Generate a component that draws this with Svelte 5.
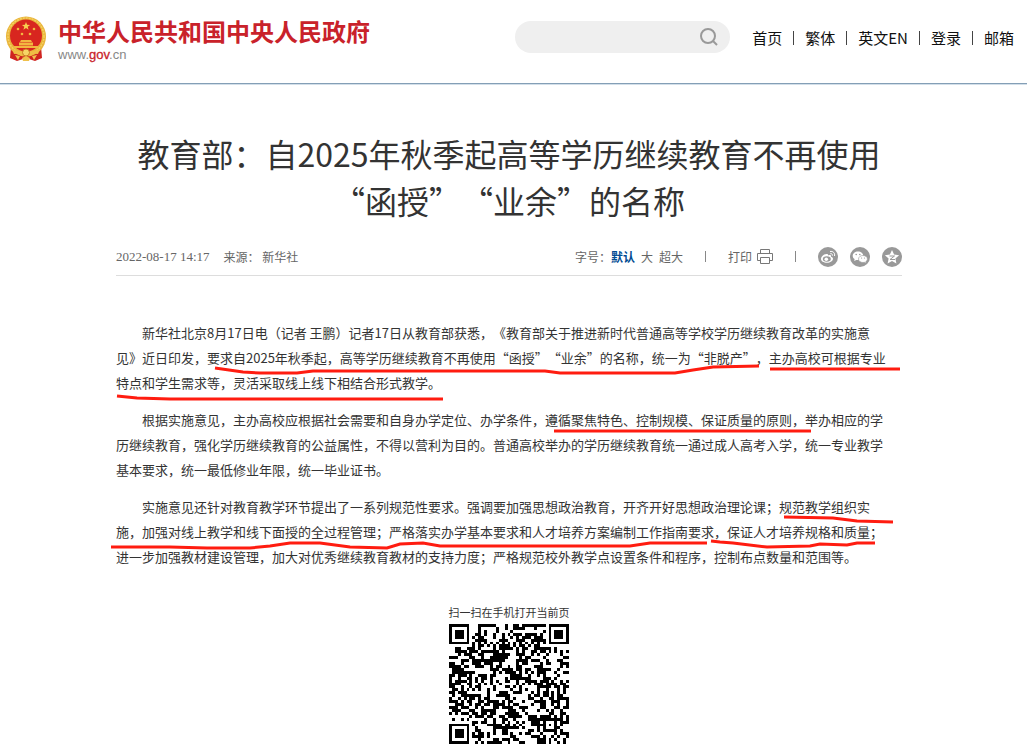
<script lang="ts">
  const nav = ['首页', '繁体', '英文EN', '登录', '邮箱'];

  const paragraphs = [
    [
      '新华社北京8月17日电（记者 王鹏）记者17日从教育部获悉，《教育部关于推进新时代普通高等学校学历继续教育改革的实施意',
      '见》近日印发，要求自2025年秋季起，高等学历继续教育不再使用“函授”“业余”的名称，统一为“非脱产”，主办高校可根据专业',
      '特点和学生需求等，灵活采取线上线下相结合形式教学。',
    ],
    [
      '根据实施意见，主办高校应根据社会需要和自身办学定位、办学条件，遵循聚焦特色、控制规模、保证质量的原则，举办相应的学',
      '历继续教育，强化学历继续教育的公益属性，不得以营利为目的。普通高校举办的学历继续教育统一通过成人高考入学，统一专业教学',
      '基本要求，统一最低修业年限，统一毕业证书。',
    ],
    [
      '实施意见还针对教育教学环节提出了一系列规范性要求。强调要加强思想政治教育，开齐开好思想政治理论课；规范教学组织实',
      '施，加强对线上教学和线下面授的全过程管理；严格落实办学基本要求和人才培养方案编制工作指南要求，保证人才培养规格和质量；',
      '进一步加强教材建设管理，加大对优秀继续教育教材的支持力度；严格规范校外教学点设置条件和程序，控制布点数量和范围等。',
    ],
  ];

  // hand-drawn red marker strokes
  const marks = [
    '215,368 229,370 243,372 260,373 297,373 313,371 470,371 545,371 560,373 675,373 693,370 713,367 759,366',
    '770,369 900,369',
    '117,396 137,398 170,399 443,399',
    '554,431 811,431',
    '784,517 833,518 857,521 893,522',
    '111,547 170,547 207,548 250,548 270,546 290,543 320,543 350,547 387,548 400,544 423,543 440,546 630,546 650,543 707,543',
    '711,541 720,542 733,543 767,547 810,546 820,544 847,545 857,543 875,543',
  ];

  // QR code, version 6, level H: 4 blocks of 15 data + 28 correction bytes
  const SIZE = 41;

  function mul(a: number, b: number) {
    let r = 0;
    for (let i = 7; i >= 0; i--) {
      r = (r << 1) ^ ((r >> 7) * 0x11d);
      if ((b >> i) & 1) r ^= a;
    }
    return r;
  }

  function correction(data: number[], degree: number) {
    const gen = Array(degree).fill(0);
    gen[degree - 1] = 1;
    let root = 1;
    for (let i = 0; i < degree; i++) {
      for (let j = 0; j < degree; j++) {
        gen[j] = mul(gen[j], root);
        if (j + 1 < degree) gen[j] ^= gen[j + 1];
      }
      root = mul(root, 2);
    }
    const rem = Array(degree).fill(0);
    for (const b of data) {
      const f = b ^ rem.shift();
      rem.push(0);
      gen.forEach((g, i) => (rem[i] ^= mul(g, f)));
    }
    return rem;
  }

  function codewords(text: string) {
    let bits = '0100' + text.length.toString(2).padStart(8, '0');
    for (const c of text) bits += c.charCodeAt(0).toString(2).padStart(8, '0');
    bits += '0000';
    const data = (bits.match(/.{8}/g) ?? []).map(b => parseInt(b, 2));
    for (let pad = 0xec; data.length < 60; pad ^= 0xfd) data.push(pad);

    const blocks = [0, 1, 2, 3].map(i => data.slice(i * 15, i * 15 + 15));
    const ecs = blocks.map(b => correction(b, 28));
    const out: number[] = [];
    for (let i = 0; i < 15; i++) for (const b of blocks) out.push(b[i]);
    for (let i = 0; i < 28; i++) for (const e of ecs) out.push(e[i]);
    return out;
  }

  function qrPath(text: string) {
    const grid: number[][] = Array.from({ length: SIZE }, () => Array(SIZE).fill(-1));
    const set = (x: number, y: number, v: boolean | number) => {
      if (x >= 0 && y >= 0 && x < SIZE && y < SIZE) grid[y][x] = v ? 1 : 0;
    };

    for (let i = 0; i < SIZE; i++) {
      set(6, i, i % 2 === 0);
      set(i, 6, i % 2 === 0);
    }
    for (const [cx, cy] of [[3, 3], [SIZE - 4, 3], [3, SIZE - 4]]) {
      for (let dy = -4; dy <= 4; dy++) {
        for (let dx = -4; dx <= 4; dx++) {
          const d = Math.max(Math.abs(dx), Math.abs(dy));
          set(cx + dx, cy + dy, d !== 2 && d !== 4);
        }
      }
    }
    for (let dy = -2; dy <= 2; dy++) {
      for (let dx = -2; dx <= 2; dx++) {
        set(34 + dx, 34 + dy, Math.max(Math.abs(dx), Math.abs(dy)) !== 1);
      }
    }

    // format bits: level H, mask 3
    const fmt = (2 << 3) | 3;
    let rem = fmt;
    for (let i = 0; i < 10; i++) rem = (rem << 1) ^ ((rem >> 9) * 0x537);
    const bits = ((fmt << 10) | rem) ^ 0x5412;
    const bit = (i: number) => (bits >> i) & 1;
    for (let i = 0; i <= 5; i++) set(8, i, bit(i));
    set(8, 7, bit(6));
    set(8, 8, bit(7));
    set(7, 8, bit(8));
    for (let i = 9; i < 15; i++) set(14 - i, 8, bit(i));
    for (let i = 0; i < 8; i++) set(SIZE - 1 - i, 8, bit(i));
    for (let i = 8; i < 15; i++) set(8, SIZE - 15 + i, bit(i));
    set(8, SIZE - 8, 1);

    const data = codewords(text);
    let n = 0;
    for (let right = SIZE - 1; right >= 1; right -= 2) {
      if (right === 6) right = 5;
      const up = ((right + 1) & 2) === 0;
      for (let v = 0; v < SIZE; v++) {
        for (let j = 0; j < 2; j++) {
          const x = right - j;
          const y = up ? SIZE - 1 - v : v;
          if (grid[y][x] !== -1) continue;
          const b = n < data.length * 8 ? (data[n >> 3] >> (7 - (n & 7))) & 1 : 0;
          grid[y][x] = (x + y) % 3 === 0 ? b ^ 1 : b;
          n++;
        }
      }
    }

    return grid.flatMap((row, y) => row.map((v, x) => (v === 1 ? `M${x} ${y}h1v1h-1z` : ''))).join('');
  }

  const qr = qrPath('http://www.gov.cn/xinwen/2022-08/17/content_5705692.htm');
</script>

<header class="site-header">
  <a class="brand" href="#home">
    <svg class="emblem" viewBox="0 0 42 46" aria-hidden="true">
      <path d="M6 30 L5 42 L12 45 L21 42 L30 45 L37 42 L36 30z" fill="#cf2420" />
      <circle cx="21" cy="20.500" r="20" fill="#e9b53a" />
      <circle cx="21" cy="20" r="18" fill="none" stroke="#f4cf62" stroke-width="1.500" stroke-dasharray="2 1" />
      <circle cx="21" cy="19.500" r="16" fill="#d8261f" />
      <path d="M21 6l1.100 2.800 3 .1-2.400 1.900.9 2.900-2.600-1.700-2.600 1.700.9-2.900-2.400-1.900 3-.1z" fill="#f7d04f" />
      <g fill="#f2b740">
        <circle cx="13" cy="13" r="1.300" /><circle cx="29" cy="13" r="1.300" />
        <circle cx="17" cy="18" r="1.300" /><circle cx="25" cy="18" r="1.300" />
        <path d="M16 24h10l1 2H15zM14 26.500h14v3H14zM9 30h24v2H9z" />
      </g>
      <path d="M7 33q14 6 28 0l-2 5q-5-1-7 2l-5-2-5 2q-2-3-7-2z" fill="#efbd45" />
      <circle cx="21" cy="36.500" r="3.500" fill="#f6d566" stroke="#c97a22" />
      <path d="M10 39l5 1-2 4zM32 39l-5 1 2 4zM17 42l4-2 4 2-1 3h-6z" fill="#efc04c" />
    </svg>
    <span class="brand-text">
      <strong>中华人民共和国中央人民政府</strong>
      <small>www.<b>gov</b>.cn</small>
    </span>
  </a>

  <form class="search" role="search">
    <input type="search" aria-label="搜索" />
    <button type="button" aria-label="搜索">
      <svg viewBox="0 0 18 18" width="18" height="18" fill="none" stroke="#999" stroke-width="2">
        <circle cx="8" cy="8" r="7" />
        <path d="M13 13l4 4" />
      </svg>
    </button>
  </form>

  <nav>
    {#each nav as item, i}
      {#if i > 0}<i></i>{/if}
      <a href="#nav">{item}</a>
    {/each}
  </nav>
</header>

<main>
  <article>
    <h1>教育部：自2025年秋季起高等学历继续教育不再使用<br />“函授”“业余”的名称</h1>

    <div class="meta">
      <time>2022-08-17 14:17</time>
      <span class="source">来源： 新华社</span>
      <div class="sizes">
        字号：<button class="active">默认</button><button>大</button><button>超大</button>
      </div>
      <i></i>
      <button class="print">
        打印
        <svg viewBox="0 0 16 15" width="16" height="15" fill="none" stroke="#777">
          <path d="M3.500 4V.5h9V4M3.500 11.500h-3v-7h15v7h-3M3.500 8.500h9v6h-9z" />
        </svg>
      </button>
      <i></i>
      <div class="share">
        <a href="#weibo" aria-label="微博">
          <svg viewBox="0 0 20 20">
            <circle cx="10" cy="10" r="10" fill="#999" />
            <path d="M8.500 7C5.500 7 3 9.800 3 12c0 2.200 2.700 3.700 6 3.700s6-1.900 6-4c0-1.200-1-1.800-2-2 .3-1.500-.6-2-2.800-1.200C10.400 7.500 9.800 7 8.500 7z" fill="#fff" />
            <ellipse cx="8.800" cy="12" rx="4" ry="2.700" fill="#999" />
            <circle cx="8.300" cy="12.200" r="1.800" fill="#fff" />
            <path d="M12 4.500c3-.6 5.200 1.500 4.500 4.500M12.300 6.700c1.500-.3 2.400.6 2.100 2" fill="none" stroke="#fff" />
          </svg>
        </a>
        <a href="#wechat" aria-label="微信">
          <svg viewBox="0 0 20 20">
            <circle cx="10" cy="10" r="10" fill="#999" />
            <path d="M8 4.500c-3 0-5.300 1.900-5.300 4.300 0 1.400.7 2.500 1.900 3.300L4.200 14l2.100-1.100 1.700.2c3 0 5.300-1.900 5.300-4.300S11 4.500 8 4.500z" fill="#fff" />
            <path d="M13 8.500c-2.500 0-4.500 1.500-4.500 3.500s2 3.500 4.500 3.500l1.400-.2 1.900 1-.5-1.700c1-.7 1.600-1.600 1.600-2.600 0-2-1.900-3.500-4.400-3.500z" fill="#fff" stroke="#999" stroke-width=".6" />
            <g fill="#999">
              <circle cx="6.200" cy="7.500" r=".8" /><circle cx="9.800" cy="7.500" r=".8" />
              <circle cx="11.600" cy="11" r=".6" /><circle cx="14.500" cy="11" r=".6" />
            </g>
          </svg>
        </a>
        <a href="#qzone" aria-label="QQ空间">
          <svg viewBox="0 0 20 20">
            <circle cx="10" cy="10" r="10" fill="#999" />
            <path d="M10 3l2.100 4.600 5 .6-3.700 3.400 1 4.900L10 14.100l-4.400 2.400 1-4.900-3.700-3.400 5-.6z" fill="#fff" />
            <path d="M7.500 9h5l-4.500 3.500h5" fill="none" stroke="#999" />
          </svg>
        </a>
      </div>
    </div>

    <div class="body">
      {#each paragraphs as lines}
        <p>
          {#each lines as line, i}{#if i > 0}<br />{/if}{line}{/each}
        </p>
      {/each}
      <svg class="marks" viewBox="116 320 786 249" width="786" height="249" aria-hidden="true">
        {#each marks as points}
          <polyline {points} />
        {/each}
      </svg>
    </div>

    <figure>
      <figcaption>扫一扫在手机打开当前页</figcaption>
      <svg viewBox="0 0 41 41" width="120" height="120" shape-rendering="crispEdges" role="img" aria-label="二维码">
        <path d={qr} />
      </svg>
    </figure>
  </article>
</main>

<style>
  :global(body) {
    background: #fff;
    color: #333;
    font-family: "Noto Sans CJK SC", sans-serif;
    text-spacing-trim: space-all;
  }

  a { color: inherit; text-decoration: none; }
  button {
    padding: 0;
    border: 0;
    background: none;
    color: inherit;
    font: inherit;
    cursor: pointer;
  }

  .site-header {
    display: flex;
    align-items: flex-start;
    box-sizing: border-box;
    height: 85px;
    padding: 16px 13px 0 5px;
    border-bottom: 1px solid #d3dfe9;
    box-shadow: inset 0 -1px #849fb6;
  }
  .brand { display: flex; gap: 11px; }
  .emblem { width: 42px; height: 46px; }
  .brand-text { display: flex; flex-direction: column; }
  .brand-text strong {
    font-size: 24px;
    line-height: 30px;
    color: #c9222a;
    white-space: nowrap;
  }
  .brand-text small {
    font: 13px/18px "Liberation Sans", sans-serif;
    color: #888;
  }
  .brand-text b { color: #c9222a; font-weight: 400; -webkit-text-stroke: 0.3px; }

  .search {
    display: flex;
    align-items: center;
    box-sizing: border-box;
    width: 215px;
    height: 32px;
    margin: 5px 22px 0 auto;
    padding: 0 12px 0 16px;
    border-radius: 16px;
    background: #efefef;
  }
  .search input {
    flex: 1;
    min-width: 0;
    border: 0;
    outline: 0;
    background: none;
  }
  .search button { display: flex; }

  nav {
    display: flex;
    align-items: center;
    gap: 11px;
    margin-top: 11px;
    font-size: 15px;
    line-height: 22px;
    color: #111;
    white-space: nowrap;
  }
  nav i { width: 1px; height: 14px; background: #444; }

  main { padding: 45px 9px 0 0; }
  article { max-width: 786px; margin: 0 auto; }

  h1 {
    margin: 0;
    font-size: 32px;
    font-weight: 400;
    line-height: 47px;
    text-align: center;
    white-space: nowrap;
  }

  .meta {
    display: flex;
    align-items: center;
    height: 37px;
    padding-top: 14px;
    border-bottom: 1px solid #ddd;
    font-size: 12px;
    line-height: 18px;
    color: #666;
    white-space: nowrap;
  }
  .meta time { font-family: "Liberation Serif", serif; font-size: 13px; }
  .source { margin-left: 14px; }
  .sizes { display: flex; gap: 6px; margin-left: auto; }
  .sizes .active { margin-left: -6px; color: #004b92; font-weight: 700; }
  .meta i { width: 1px; height: 11px; margin: 0 22px; background: #888; }
  .print { display: flex; align-items: center; gap: 5px; }
  .share { display: flex; gap: 12px; }
  .share a, .share svg { display: block; width: 20px; height: 20px; }

  .body {
    position: relative;
    padding-top: 44px;
    font-size: 13px;
    line-height: 25px;
  }
  .body p {
    margin: 0 0 12px;
    text-indent: 2em;
    white-space: nowrap;
  }
  .marks {
    position: absolute;
    top: 44px;
    left: 0;
    overflow: visible;
    fill: none;
    stroke: #ff1c10;
    stroke-width: 3px;
    pointer-events: none;
  }

  figure { margin: 34px 0 0; text-align: center; }
  figcaption {
    margin-bottom: 3px;
    font-size: 11px;
    line-height: 18px;
  }
  figure svg { display: block; margin: 0 auto; }
</style>
